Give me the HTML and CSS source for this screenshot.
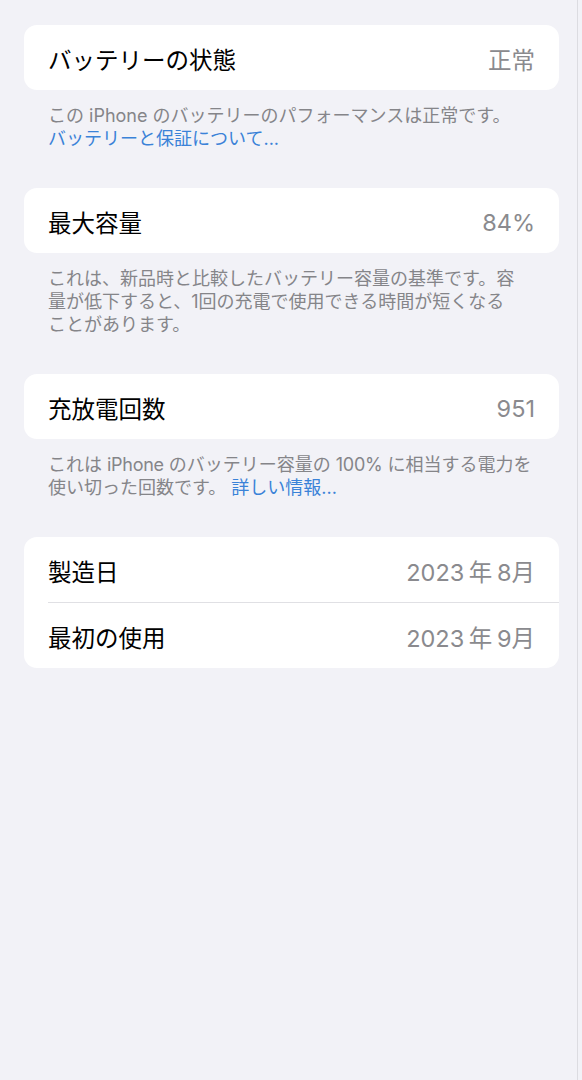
FILE: index.html
```html
<!DOCTYPE html>
<html lang="ja">
<head>
  <meta charset="UTF-8">
  <title>バッテリーの状態と充電</title>
  <link rel="stylesheet" href="styles.css">
</head>
<body>

  <div class="screen">

    <!-- 状態 -->
    <section class="group">
      <div class="card">
        <div class="row">
          <span class="label">バッテリーの状態</span>
          <span class="value">正常</span>
        </div>
      </div>
      <p class="footer">
        この iPhone のバッテリーのパフォーマンスは正常です。<br>
        <a href="#" class="link">バッテリーと保証について...</a>
      </p>
    </section>

    <!-- 最大容量 -->
    <section class="group">
      <div class="card">
        <div class="row">
          <span class="label">最大容量</span>
          <span class="value">84%</span>
        </div>
      </div>
      <p class="footer">これは、新品時と比較したバッテリー容量の基準です。容<br>量が低下すると、1回の充電で使用できる時間が短くなる<br>ことがあります。</p>
    </section>

    <!-- 充放電回数 -->
    <section class="group">
      <div class="card">
        <div class="row">
          <span class="label">充放電回数</span>
          <span class="value">951</span>
        </div>
      </div>
      <p class="footer">これは <span class="latin">iPhone</span> のバッテリー容量の <span class="latin">100%</span> に相当する電力を<br>使い切った回数です。 <a href="#" class="link">詳しい情報...</a></p>
    </section>

    <!-- 日付 -->
    <section class="group">
      <div class="card">
        <div class="row">
          <span class="label">製造日</span>
          <span class="value">2023 年 8月</span>
        </div>
        <div class="row">
          <span class="label">最初の使用</span>
          <span class="value">2023 年 9月</span>
        </div>
      </div>
    </section>

  </div>

</body>
</html>
```

FILE: styles.css
```css
/* 全体 */
html, body {
  margin: 0;
  background-color: #f2f2f7;
}

body {
  font-family: Inter, "Noto Sans CJK JP", sans-serif;
}

/* 画面の枠（右端に細い線） */
.screen {
  width: 578px;
  min-height: 100vh;
  box-sizing: border-box;
  padding: 25px 18px 0 24px;
  border-right: 1px solid #dcdce1;
}

/* 白いカード */
.card {
  background-color: #ffffff;
  border-radius: 13px;
  overflow: hidden;
}

/* 1行分：左にラベル、右に値 */
.row {
  height: 65px;
  box-sizing: border-box;
  display: flex;
  justify-content: space-between;
  align-items: center;
  margin-left: 24px;
  padding: 3px 24px 0 0;
}

/* 2行目以降は区切り線を入れる */
.row + .row {
  height: 66px;
  border-top: 1px solid #e0e0e4;
}

.label {
  font-size: 23.5px;
  color: #000000;
}

.value {
  font-size: 23.5px;
  color: #8a8a8e;
  word-spacing: -2px;
}

/* カード下の説明文 */
.footer {
  margin: 0;
  padding: 14px 0 38px 24px;
  font-size: 18px;
  line-height: 23px;
  color: #858589;
  white-space: nowrap;
}

.latin {
  letter-spacing: -0.3px;
}

.link {
  color: #3a82d8;
  text-decoration: none;
}
```
